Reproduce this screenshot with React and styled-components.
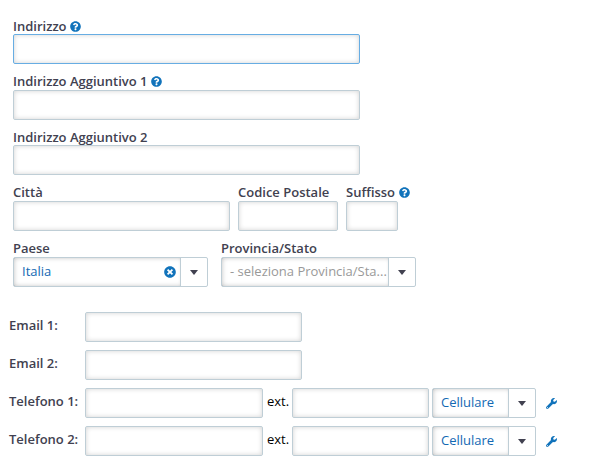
import React from 'react';
import { useState } from 'react';
import styled, { createGlobalStyle } from 'styled-components';
import { FaQuestionCircle, FaTimesCircle, FaWrench } from 'react-icons/fa';

const GlobalStyle = createGlobalStyle`
  * {
    box-sizing: border-box;
  }
  body {
    margin: 0;
    background-color: #ffffff;
    color: #000000;
    font-family: 'Open Sans', sans-serif;
    font-size: 13px;
  }
`;

const Form = styled.form`
  padding-top: 14px;
`;

const AddressSection = styled.section`
  display: flex;
  flex-direction: column;
  padding-left: 13px;
`;

const AddressRow = styled.div`
  display: flex;
  gap: ${(props) => props.$gap || 8}px;
  margin-bottom: ${(props) => props.$space || 6}px;
`;

const FieldContainer = styled.div`
  width: ${(props) => props.$width}px;
  > label {
    display: flex;
    align-items: center;
    height: 20px;
    padding-top: ${(props) => (props.$low ? 4 : 2)}px;
    color: #414150;
    font-weight: 600;
    line-height: 20px;
    white-space: nowrap;
    > svg {
      flex: none;
      margin: 1px 0 0 3.5px;
      color: #1173bb;
      font-size: 11px;
    }
  }
`;

const TextInput = styled.input`
  display: block;
  width: ${(props) => props.$width || 347}px;
  height: 30px;
  margin: 0;
  padding: 0 8px;
  border: 1px solid #bfced6;
  border-radius: 2px;
  outline: none;
  box-shadow: inset 0 0 5px rgba(0, 0, 0, 0.18);
  font: inherit;
  color: #1268b3;
  &.active {
    border-color: #67ade3;
  }
`;

const SelectBox = styled.div`
  display: flex;
  width: ${(props) => props.$width}px;
  height: 30px;
  border: 1px solid #bfced6;
  border-radius: 2px;
  cursor: pointer;
  > div.value {
    flex: 1;
    min-width: 0;
    display: flex;
    align-items: center;
    padding: 0 ${(props) => (props.$empty ? 0 : 4)}px 0 8px;
    color: ${(props) => (props.$empty ? '#999999' : '#1268b3')};
    box-shadow: inset 3px 0 5px -2px rgba(0, 0, 0, 0.14),
      inset 0 3px 5px -3px rgba(0, 0, 0, 0.18),
      inset 0 -3px 5px -3px rgba(0, 0, 0, 0.18);
    > span {
      flex: 1;
      padding-bottom: 2px;
      white-space: nowrap;
      line-height: 20px;
    }
    > svg {
      flex: none;
      font-size: 12px;
      color: #1173bb;
    }
  }
  > div.toggle {
    width: 27px;
    display: flex;
    align-items: center;
    justify-content: center;
    border-left: 1px solid #bfced6;
  }
`;

const Caret = styled.span`
  border-top: 5px solid #414150;
  border-right: 4px solid transparent;
  border-left: 4px solid transparent;
`;

const ContactSection = styled.section`
  display: flex;
  flex-direction: column;
  gap: 8px;
  margin-top: 19px;
  padding-left: 9px;
`;

const ContactRow = styled.div`
  display: flex;
  height: 30px;
  > label {
    width: 76px;
    color: #414150;
    font-weight: 600;
    line-height: 27px;
    white-space: nowrap;
  }
  > span.ext {
    width: 29px;
    padding-left: 4px;
    line-height: 27px;
  }
  > ${SelectBox} {
    margin-left: 3px;
  }
  > svg {
    margin: 10px 0 0 10px;
    color: #1173bb;
    font-size: 11px;
  }
`;

function Field({ id, label, width, help, low, children }) {
  return (
    <FieldContainer $width={width} $low={low}>
      <label htmlFor={id}>
        {label}
        {help && <FaQuestionCircle />}
      </label>
      {children || <TextInput id={id} $width={width} />}
    </FieldContainer>
  );
}

function Select({ value, placeholder, width, onClear }) {
  return (
    <SelectBox $width={width} $empty={!value}>
      <div className="value">
        <span>{value || placeholder}</span>
        {value && onClear && <FaTimesCircle onClick={onClear} />}
      </div>
      <div className="toggle">
        <Caret />
      </div>
    </SelectBox>
  );
}

function PhoneRow({ number }) {
  return (
    <ContactRow>
      <label htmlFor={`phone${number}`}>Telefono {number}:</label>
      <TextInput id={`phone${number}`} $width={178} />
      <span className="ext">ext.</span>
      <TextInput $width={137} />
      <Select value="Cellulare" width={104} />
      <FaWrench />
    </ContactRow>
  );
}

function App() {
  const [country, setCountry] = useState('Italia');

  return (
    <>
      <GlobalStyle />
      <Form>
        <AddressSection>
          <AddressRow>
            <Field id="address" label="Indirizzo" width={347} help low>
              <TextInput id="address" className="active" />
            </Field>
          </AddressRow>
          <AddressRow $space={5}>
            <Field id="address1" label="Indirizzo Aggiuntivo 1" width={347} help />
          </AddressRow>
          <AddressRow>
            <Field id="address2" label="Indirizzo Aggiuntivo 2" width={347} low />
          </AddressRow>
          <AddressRow>
            <Field id="city" label="Città" width={217} />
            <Field id="zip" label="Codice Postale" width={100} />
            <Field id="suffix" label="Suffisso" width={52} help />
          </AddressRow>
          <AddressRow $gap={13}>
            <Field label="Paese" width={195}>
              <Select value={country} width={195} onClear={() => setCountry('')} />
            </Field>
            <Field label="Provincia/Stato" width={195}>
              <Select placeholder="- seleziona Provincia/Sta..." width={195} />
            </Field>
          </AddressRow>
        </AddressSection>
        <ContactSection>
          {[1, 2].map((number) => (
            <ContactRow key={number}>
              <label htmlFor={`email${number}`}>Email {number}:</label>
              <TextInput id={`email${number}`} $width={217} />
            </ContactRow>
          ))}
          {[1, 2].map((number) => (
            <PhoneRow key={number} number={number} />
          ))}
        </ContactSection>
      </Form>
    </>
  );
}

export default App;
